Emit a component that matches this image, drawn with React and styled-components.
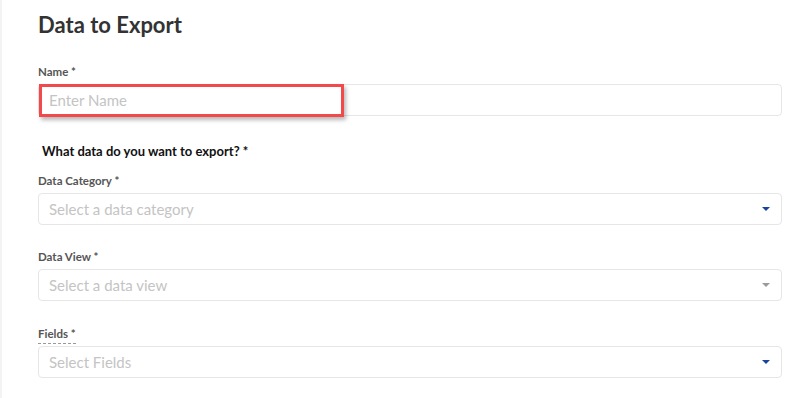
import React from 'react';
import styled, { createGlobalStyle } from 'styled-components';

const GlobalStyle = createGlobalStyle`
    html, body {
        margin : 0;
        padding : 0;
        background-color : #fff;
        font-family : Lato, "Noto Sans", sans-serif;
    }
`;

const Page = styled.div`
    width : 806px;
    height : 398px;
    box-sizing : border-box;
    border-left : 2px solid #f3f3f3;
    padding : 10px 24px 0 36px;
    overflow : hidden;
`;

const Title = styled.h2`
    margin : 0;
    font-size : 22px;
    font-weight : 700;
    color : #333;
    line-height : 30px;
`;

const Field = styled.div`
    display : flex;
    flex-direction : column;
    margin-top : ${(props)=>props.top}px;
`;

const Label = styled.span`
    align-self : flex-start;
    font-size : 11.5px;
    font-weight : 700;
    color : #555;
    line-height : 14px;
    border-bottom : ${(props)=>(props.dashed ? "1px dashed #999" : "none")};
    padding-bottom : ${(props)=>(props.dashed ? "2px" : "0")};
    margin-bottom : ${(props)=>(props.dashed ? "2px" : "5px")};
`;

const Question = styled.div`
    margin-top : 27px;
    padding-left : 4px;
    font-size : 13px;
    font-weight : 700;
    color : #111;
    line-height : 16px;
`;

const InputWrap = styled.div`
    position : relative;
`;

const TextInput = styled.input`
    width : 100%;
    height : 32px;
    box-sizing : border-box;
    border : 1px solid #e6e6e6;
    border-radius : 4px;
    padding : 0 10px;
    font-family : inherit;
    font-size : 15px;
    color : #333;
    outline : none;
    &::placeholder { color : #c4c4c4; }
`;

const Highlight = styled.div`
    position : absolute;
    left : 1px;
    top : 0;
    width : 305px;
    height : 33px;
    box-sizing : border-box;
    border : 3px solid #f24a4a;
    box-shadow : 2px 3px 4px rgba(0,0,0,0.28);
    pointer-events : none;
`;

const SelectBox = styled.div`
    height : 32px;
    box-sizing : border-box;
    border : 1px solid #e6e6e6;
    border-radius : 4px;
    padding : 0 11px 0 10px;
    display : flex;
    align-items : center;
    justify-content : space-between;
    font-size : 15px;
    color : #c4c4c4;
`;

const Caret = styled.span`
    width : 0;
    height : 0;
    border-left : 4px solid transparent;
    border-right : 4px solid transparent;
    border-top : 4px solid ${(props)=>(props.muted ? "#9a9a9a" : "#1844a0")};
`;

const selects = [
    { label : "Data Category *", placeholder : "Select a data category", top : 15 },
    { label : "Data View *", placeholder : "Select a data view", top : 25, muted : true },
    { label : "Fields *", placeholder : "Select Fields", top : 26, dashed : true },
];

const App = ()=>{
    return(
        <>
            <GlobalStyle />
            <Page>
                <Title>Data to Export</Title>
                <Field top={25}>
                    <Label>Name *</Label>
                    <InputWrap>
                        <TextInput placeholder="Enter Name" />
                        <Highlight />
                    </InputWrap>
                </Field>
                <Question>What data do you want to export? *</Question>
                {selects.map((s)=>(
                    <Field key={s.label} top={s.top}>
                        <Label dashed={s.dashed}>{s.label}</Label>
                        <SelectBox>
                            {s.placeholder}
                            <Caret muted={s.muted} />
                        </SelectBox>
                    </Field>
                ))}
            </Page>
        </>
    );
}

export default App;
